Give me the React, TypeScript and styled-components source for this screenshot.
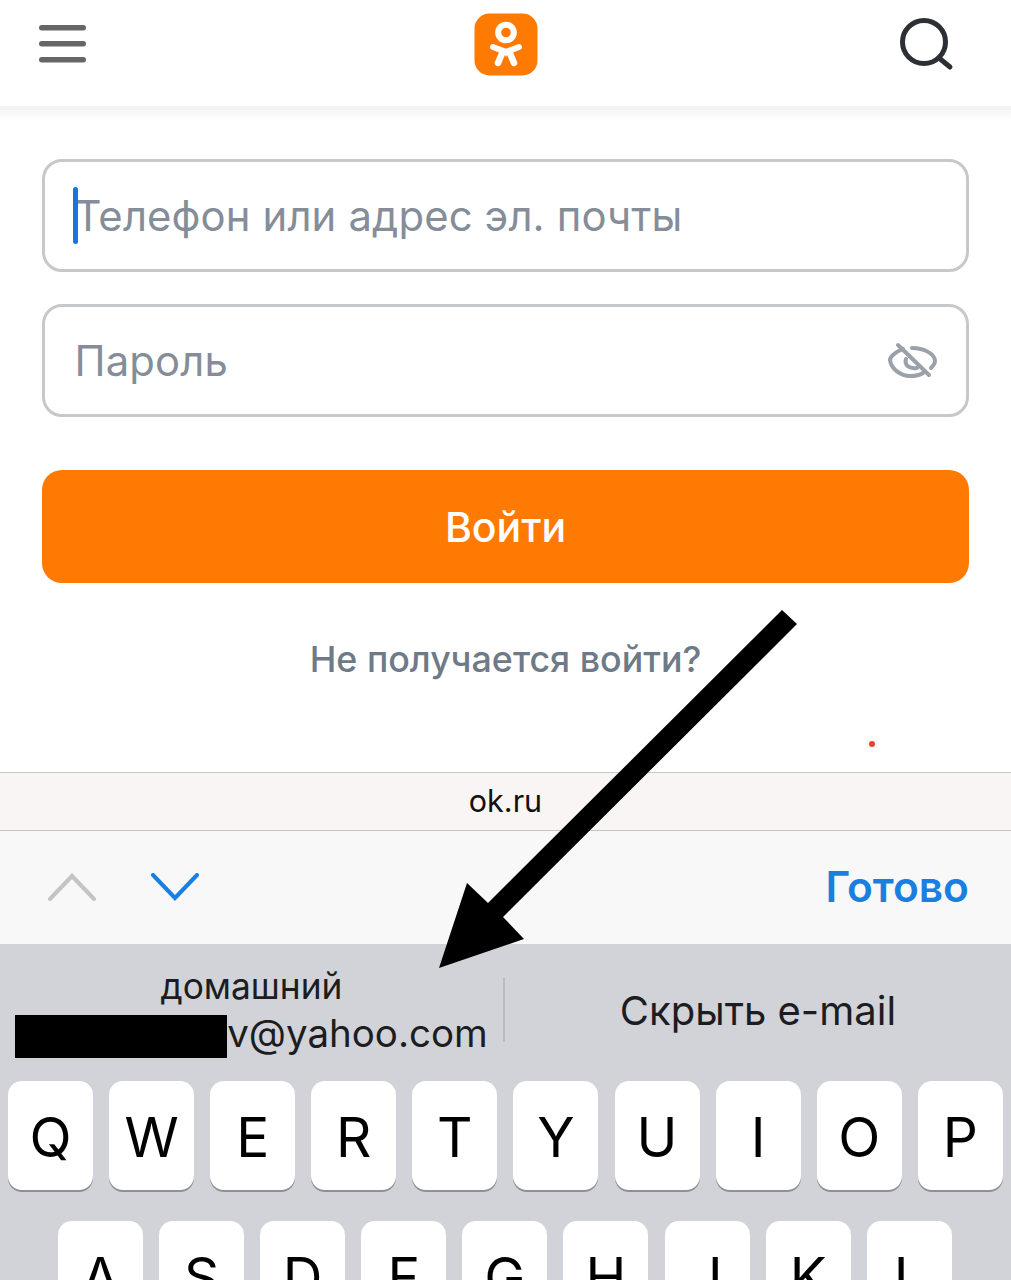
import styled, { createGlobalStyle } from "styled-components"

const GlobalStyle = createGlobalStyle`
  html, body {
    margin: 0;
    padding: 0;
    background: #fff;
  }
  * {
    box-sizing: border-box;
  }
`

const Page = styled.div`
  position: relative;
  width: 1011px;
  height: 1280px;
  overflow: hidden;
  display: flex;
  flex-direction: column;
  font-family: Inter, "Liberation Sans", sans-serif;
`

const Header = styled.header`
  height: 106px;
  flex: none;
  display: grid;
  grid-template-columns: 1fr auto 1fr;
  align-items: start;
  padding: 13px 39px 0;
  background: #fff;
`

const Shade = styled.div`
  height: 14px;
  flex: none;
  background: linear-gradient(#f1f1f2, #fff);
`

const MenuIcon = styled.svg`
  margin-top: 12px;
`

const SearchIcon = styled.svg`
  margin: 4px 18px 0 0;
  justify-self: end;
`

const Form = styled.main`
  height: 652px;
  flex: none;
  padding: 39px 42px 0;
  display: flex;
  flex-direction: column;
`

const Field = styled.div<{ $gap?: number }>`
  position: relative;
  height: 113px;
  margin-bottom: ${(p) => p.$gap ?? 32}px;
  padding: 0 28px 0 29.5px;
  display: flex;
  align-items: center;
  justify-content: space-between;
  border: 3px solid #c6c8cb;
  border-radius: 20px;
  background: #fff;
`

const Placeholder = styled.span`
  font-size: 41.8px;
  letter-spacing: 0.15px;
  color: #858d99;
`

const Caret = styled.span`
  position: absolute;
  left: 28px;
  top: 25px;
  width: 5px;
  height: 57px;
  border-radius: 3px;
  background: #1a73e0;
`

const LoginButton = styled.button`
  height: 113px;
  flex: none;
  border: 0;
  border-radius: 20px;
  background: #ff7a03;
  color: #fff;
  font-family: inherit;
  font-size: 41px;
  font-weight: 500;
`

const HelpLink = styled.a`
  margin-top: 54px;
  text-align: center;
  font-size: 35.8px;
  font-weight: 500;
  color: #6f7a87;
`

const RedDot = styled.span`
  position: absolute;
  left: 869px;
  top: 741px;
  width: 6px;
  height: 6px;
  border-radius: 50%;
  background: #e8432e;
`

const AddressBar = styled.div`
  height: 59px;
  flex: none;
  padding-bottom: 2px;
  display: flex;
  align-items: center;
  justify-content: center;
  border-top: 1px solid #c9c8c8;
  border-bottom: 1.5px solid #c4c3c5;
  background: #f8f5f4;
  font-size: 30.5px;
  color: #111;
`

const Toolbar = styled.div`
  height: 113px;
  flex: none;
  padding: 0 42px 2px 48px;
  display: flex;
  align-items: center;
  gap: 55px;
  background: #f8f8f9;
`

const Done = styled.span`
  margin-left: auto;
  font-size: 42.5px;
  font-weight: 600;
  color: #1a7fe0;
`

const Keyboard = styled.section`
  flex: 1;
  background: #d1d3d9;
  display: flex;
  flex-direction: column;
`

const Suggestions = styled.div`
  height: 137px;
  flex: none;
  display: flex;
  align-items: center;
`

const Suggestion = styled.div`
  width: 503px;
  flex: none;
  display: flex;
  flex-direction: column;
  align-items: center;
  color: #1c1d20;
`

const SuggestionLabel = styled.span`
  font-size: 35.3px;
  line-height: 40px;
`

const EmailLine = styled.span`
  display: flex;
  align-items: center;
  font-size: 38.5px;
  line-height: 48px;
`

const Redacted = styled.span`
  width: 212px;
  height: 43px;
  margin-top: 8px;
  background: #000;
`

const SuggestionDivider = styled.span`
  width: 2px;
  height: 64px;
  margin-bottom: 6px;
  flex: none;
  background: #b9bbc1;
`

const HideEmail = styled.div`
  flex: 1;
  margin-bottom: 5px;
  text-align: center;
  font-size: 40px;
  color: #1c1d20;
`

const KeyRow = styled.div<{ $inset: number }>`
  flex: none;
  display: flex;
  gap: 16.1px;
  padding-left: ${(p) => p.$inset}px;
  margin-bottom: 31px;
`

const Key = styled.div`
  width: 85px;
  height: 109px;
  flex: none;
  padding-top: 23px;
  text-align: center;
  border-radius: 14px;
  background: #fff;
  box-shadow: 0 2px 0 #8f9096;
  font-size: 55px;
  line-height: 66px;
  color: #000;
`

const ArrowOverlay = styled.svg`
  position: absolute;
  left: 0;
  top: 0;
  pointer-events: none;
`

const rows = [
  { inset: 8, keys: ["Q", "W", "E", "R", "T", "Y", "U", "I", "O", "P"] },
  { inset: 58, keys: ["A", "S", "D", "F", "G", "H", "J", "K", "L"] },
]

function Logo() {
  return (
    <svg width="64" height="64" viewBox="0 0 64 64">
      <rect x="0.5" y="0.5" width="63" height="62" rx="15" fill="#ff7a03" />
      <circle cx="32" cy="19.5" r="7.8" fill="none" stroke="#fff" strokeWidth="6" />
      <path
        d="M19 34 L32 39 L45 34"
        fill="none"
        stroke="#fff"
        strokeWidth="6"
        strokeLinecap="round"
        strokeLinejoin="round"
      />
      <path d="M29 38 L24 50 M35 38 L40 50" stroke="#fff" strokeWidth="6.5" strokeLinecap="round" />
      <path d="M28 37 H36 L32 44 Z" fill="#fff" />
    </svg>
  )
}

function EyeOff() {
  return (
    <svg width="50" height="44" viewBox="0 0 50 44" fill="none" stroke="#9aa1ab" strokeWidth="4" strokeLinecap="round">
      <path d="M15 10 C7 13 2 18 2 21 C3 30 13 37 22 37 C27 37 32 36 35 34" />
      <path d="M24 9 C36 9 47 15 47 22 C47 25 45 27 43 29" />
      <path d="M18 20 C16 26 21 30 29 29" />
      <path d="M10 6 L41 36" />
    </svg>
  )
}

export default function App() {
  return (
    <Page>
      <GlobalStyle />
      <Header>
        <MenuIcon width="47" height="38" viewBox="0 0 47 38" fill="#666">
          <rect y="0" width="47" height="5.5" rx="2.7" />
          <rect y="16" width="47" height="5.5" rx="2.7" />
          <rect y="32" width="47" height="5.5" rx="2.7" />
        </MenuIcon>
        <Logo />
        <SearchIcon width="54" height="54" viewBox="0 0 54 54" fill="none" stroke="#2c2f33" strokeLinecap="round">
          <circle cx="24" cy="25" r="21.5" strokeWidth="5" />
          <path d="M39 41 L50 50" strokeWidth="5" />
        </SearchIcon>
      </Header>
      <Shade />
      <Form>
        <Field>
          <Caret />
          <Placeholder>Телефон или адрес эл. почты</Placeholder>
        </Field>
        <Field $gap={53}>
          <Placeholder>Пароль</Placeholder>
          <EyeOff />
        </Field>
        <LoginButton>Войти</LoginButton>
        <HelpLink>Не получается войти?</HelpLink>
      </Form>
      <RedDot />
      <AddressBar>ok.ru</AddressBar>
      <Toolbar>
        <svg width="48" height="28" viewBox="0 0 48 28" fill="none" stroke="#c4c4c6" strokeWidth="4" strokeLinecap="round">
          <path d="M2 26 L24 3 L46 26" />
        </svg>
        <svg width="48" height="28" viewBox="0 0 48 28" fill="none" stroke="#1a7fe0" strokeWidth="4" strokeLinecap="round">
          <path d="M2 2 L24 25 L46 2" />
        </svg>
        <Done>Готово</Done>
      </Toolbar>
      <Keyboard>
        <Suggestions>
          <Suggestion>
            <SuggestionLabel>домашний</SuggestionLabel>
            <EmailLine>
              <Redacted />
              v@yahoo.com
            </EmailLine>
          </Suggestion>
          <SuggestionDivider />
          <HideEmail>Скрыть e-mail</HideEmail>
        </Suggestions>
        {rows.map((row) => (
          <KeyRow key={row.inset} $inset={row.inset}>
            {row.keys.map((k) => (
              <Key key={k}>{k}</Key>
            ))}
          </KeyRow>
        ))}
      </Keyboard>
      <ArrowOverlay width="1011" height="1280" viewBox="0 0 1011 1280">
        <polygon points="782,610 797,624 503,917 524,939 439,968 467,883 488,903" fill="#000" />
      </ArrowOverlay>
    </Page>
  )
}
